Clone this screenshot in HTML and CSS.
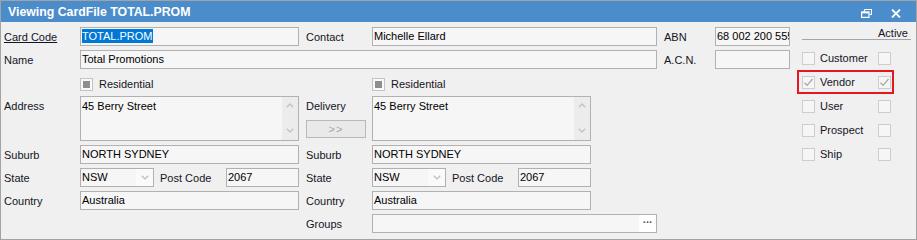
FILE: index.html
```html
<!DOCTYPE html>
<html lang="en">
  <head>
    <meta charset="UTF-8" />
    <meta name="viewport" content="width=device-width, initial-scale=1.0" />
    <title>Viewing CardFile TOTAL.PROM</title>
    <link rel="stylesheet" href="styles.css">
  </head>
  <body>
    <div class="window">
      <div class="titlebar">
        <span class="title">Viewing CardFile TOTAL.PROM</span>
        <div class="controls">
          <svg class="restore" width="11" height="9" viewBox="0 0 11 9">
            <path d="M3.5 0.5h7v5h-2M3.5 0.5v2" fill="none" stroke="#fff" stroke-width="1.2" />
            <rect x="0.6" y="3" width="7.4" height="5.4" fill="none" stroke="#fff" stroke-width="1.2" />
            <path d="M0.6 3.6h7.4" stroke="#fff" stroke-width="1.6" />
          </svg>
          <svg class="close" width="10" height="9" viewBox="0 0 10 9">
            <path d="M1 0.5l8 8M9 0.5l-8 8" stroke="#fff" stroke-width="1.8" />
          </svg>
        </div>
      </div>

      <div class="content">
        <div class="form">
          <!-- row 1 -->
          <div class="lbl"><u>Card Code</u></div>
          <div class="field"><span class="sel">TOTAL.PROM</span></div>
          <div class="lbl gap">Contact</div>
          <div class="field span2">Michelle Ellard</div>
          <div class="lbl gap">ABN</div>
          <div class="field">68 002 200 555</div>

          <!-- row 2 -->
          <div class="lbl">Name</div>
          <div class="field span4">Total Promotions</div>
          <div class="lbl gap">A.C.N.</div>
          <div class="field"></div>

          <!-- row 3 -->
          <div class="check c2"><span class="tick"></span>Residential</div>
          <div class="check c4"><span class="tick"></span>Residential</div>

          <!-- row 4 -->
          <div class="lbl top c1">Address</div>
          <div class="memo">
            <div class="memo-text">45 Berry Street</div>
            <div class="vscroll">
              <svg width="8" height="5" viewBox="0 0 8 5"><path d="M0.8 4.3L4 1.1l3.2 3.2" fill="none" stroke="#c4c4c4" stroke-width="1.4" /></svg>
              <svg width="8" height="5" viewBox="0 0 8 5"><path d="M0.8 0.7L4 3.9l3.2-3.2" fill="none" stroke="#c4c4c4" stroke-width="1.4" /></svg>
            </div>
          </div>
          <div class="delivery">
            <div class="lbl top">Delivery</div>
            <div class="copy-btn">&gt;&gt;</div>
          </div>
          <div class="memo">
            <div class="memo-text">45 Berry Street</div>
            <div class="vscroll">
              <svg width="8" height="5" viewBox="0 0 8 5"><path d="M0.8 4.3L4 1.1l3.2 3.2" fill="none" stroke="#c4c4c4" stroke-width="1.4" /></svg>
              <svg width="8" height="5" viewBox="0 0 8 5"><path d="M0.8 0.7L4 3.9l3.2-3.2" fill="none" stroke="#c4c4c4" stroke-width="1.4" /></svg>
            </div>
          </div>

          <!-- row 5 -->
          <div class="lbl c1">Suburb</div>
          <div class="field">NORTH SYDNEY</div>
          <div class="lbl gap">Suburb</div>
          <div class="field">NORTH SYDNEY</div>

          <!-- row 6 -->
          <div class="lbl c1">State</div>
          <div class="state-row">
            <div class="combo">
              <div class="combo-text">NSW</div>
              <div class="combo-btn">
                <svg width="8" height="5" viewBox="0 0 8 5"><path d="M0.8 0.7L4 3.9l3.2-3.2" fill="none" stroke="#bdbdbd" stroke-width="1.3" /></svg>
              </div>
            </div>
            <div class="lbl pc">Post Code</div>
            <div class="field postcode">2067</div>
          </div>
          <div class="lbl gap">State</div>
          <div class="state-row">
            <div class="combo">
              <div class="combo-text">NSW</div>
              <div class="combo-btn">
                <svg width="8" height="5" viewBox="0 0 8 5"><path d="M0.8 0.7L4 3.9l3.2-3.2" fill="none" stroke="#bdbdbd" stroke-width="1.3" /></svg>
              </div>
            </div>
            <div class="lbl pc">Post Code</div>
            <div class="field postcode">2067</div>
          </div>

          <!-- row 7 -->
          <div class="lbl c1">Country</div>
          <div class="field">Australia</div>
          <div class="lbl gap">Country</div>
          <div class="field">Australia</div>

          <!-- row 8 -->
          <div class="lbl gap c3">Groups</div>
          <div class="field span2 lookup">
            <span class="lookup-text"></span>
            <span class="dots">&middot;&middot;&middot;</span>
          </div>
        </div>

        <div class="roles">
          <div class="roles-head">Active</div>
          <div class="role"><span class="box"></span><span class="role-name">Customer</span><span class="box"></span></div>
          <div class="role marked">
            <span class="box"><svg width="11" height="11" viewBox="0 0 11 11"><path d="M1.5 5.8l2.6 2.6 5.4-6.4" fill="none" stroke="#a8a8a8" stroke-width="1.3" /></svg></span>
            <span class="role-name">Vendor</span>
            <span class="box"><svg width="11" height="11" viewBox="0 0 11 11"><path d="M1.5 5.8l2.6 2.6 5.4-6.4" fill="none" stroke="#a8a8a8" stroke-width="1.3" /></svg></span>
          </div>
          <div class="role"><span class="box"></span><span class="role-name">User</span><span class="box"></span></div>
          <div class="role"><span class="box"></span><span class="role-name">Prospect</span><span class="box"></span></div>
          <div class="role"><span class="box"></span><span class="role-name">Ship</span><span class="box"></span></div>
        </div>
      </div>
    </div>
  </body>
</html>
```

FILE: styles.css
```css
* {
  box-sizing: border-box;
}
body {
  margin: 0;
  font-family: "Liberation Sans", Arial, sans-serif;
  font-size: 11px;
  color: #141424;
}
.window {
  width: 917px;
  height: 240px;
  border: 1px solid #a3a3a3;
  background: #f0f0f0;
}
.titlebar {
  display: flex;
  align-items: center;
  height: 21px;
  padding-left: 7px;
  background: #4b8dcb;
  color: #fff;
  font-weight: bold;
  font-size: 12.3px;
}
.controls {
  display: flex;
  align-items: center;
  gap: 19px;
  margin-left: auto;
  margin-right: 15px;
  padding-top: 3px;
}

.content {
  display: flex;
  padding: 5px 0 0 3px;
}
.form {
  display: grid;
  grid-template-columns: 76px 219px 73px 219px 66px 58px 75px;
  grid-template-rows: 19px 19px 19px 45px 19px 19px 19px 19px;
  row-gap: 4px;
}
.c1 { grid-column: 1; }
.c2 { grid-column: 2; }
.c3 { grid-column: 3; }
.c4 { grid-column: 4; }
.span2 { grid-column: span 2; }
.span4 { grid-column: span 4; }

.lbl {
  display: flex;
  align-items: center;
  white-space: nowrap;
}
.lbl.gap {
  padding-left: 7px;
}
.lbl.top {
  align-items: flex-start;
  padding-top: 4px;
}
.field {
  border: 1px solid #b1b1b1;
  background: #f6f6f6;
  padding: 0 1px;
  line-height: 17px;
  color: #000;
  white-space: nowrap;
  overflow: hidden;
}
.sel {
  display: inline-block;
  background: #0078d7;
  color: #fff;
  line-height: 14px;
}

.check {
  display: flex;
  align-items: center;
  padding-top: 3px;
}
.tick {
  width: 13px;
  height: 13px;
  margin-right: 6px;
  border: 1px solid #c3c3c3;
  background: #fafafa;
  padding: 2px;
}
.tick::before {
  content: "";
  display: block;
  width: 7px;
  height: 7px;
  background: #8e8e8e;
}

.memo {
  display: flex;
  border: 1px solid #b1b1b1;
  background: #f6f6f6;
  color: #000;
}
.memo-text {
  flex: 1;
  padding: 3px 1px;
}
.vscroll {
  display: flex;
  flex-direction: column;
  align-items: center;
  justify-content: space-between;
  width: 16px;
  padding: 6px 0 7px;
  background: #ececec;
}
.delivery {
  display: flex;
  flex-direction: column;
  padding-left: 7px;
}
.delivery .lbl.top {
  height: 24px;
}
.copy-btn {
  width: 60px;
  height: 18px;
  border: 1px solid #b9b9b9;
  background: #e9e9e9;
  color: #a6a6a6;
  text-align: center;
  line-height: 16px;
  letter-spacing: 1px;
}

.state-row {
  display: flex;
}
.combo {
  display: flex;
  width: 74px;
  border: 1px solid #b1b1b1;
  background: #f6f6f6;
  color: #000;
}
.combo-text {
  flex: 1;
  padding: 0 1px;
  line-height: 17px;
}
.combo-btn {
  display: flex;
  align-items: center;
  justify-content: center;
  width: 17px;
  background: #fafafa;
}
.lbl.pc {
  flex: 1;
  padding-left: 6px;
}
.postcode {
  width: 73px;
}
.lookup {
  display: flex;
  padding: 0;
}
.lookup-text {
  flex: 1;
}
.dots {
  width: 17px;
  background: #fff;
  color: #555;
  font-weight: bold;
  text-align: center;
  line-height: 15px;
  letter-spacing: -0.5px;
}

.roles {
  width: 114px;
  margin-left: 7px;
}
.roles-head {
  height: 13px;
  margin-left: 5px;
  padding-right: 3px;
  line-height: 12px;
  text-align: right;
  border-bottom: 1px solid #a5a5a5;
}
.roles-head + .role {
  margin-top: 6px;
}
.role {
  display: flex;
  align-items: center;
  width: 97px;
  height: 24px;
  padding: 0 1px 0 3px;
  border: 2px solid transparent;
}
.role.marked {
  border-color: #e5171f;
}
.box {
  display: flex;
  align-items: center;
  justify-content: center;
  width: 13px;
  height: 13px;
  border: 1px solid #cdcdcd;
  background: #f6f6f6;
}
.role-name {
  flex: 1;
  margin-left: 5px;
}
```
